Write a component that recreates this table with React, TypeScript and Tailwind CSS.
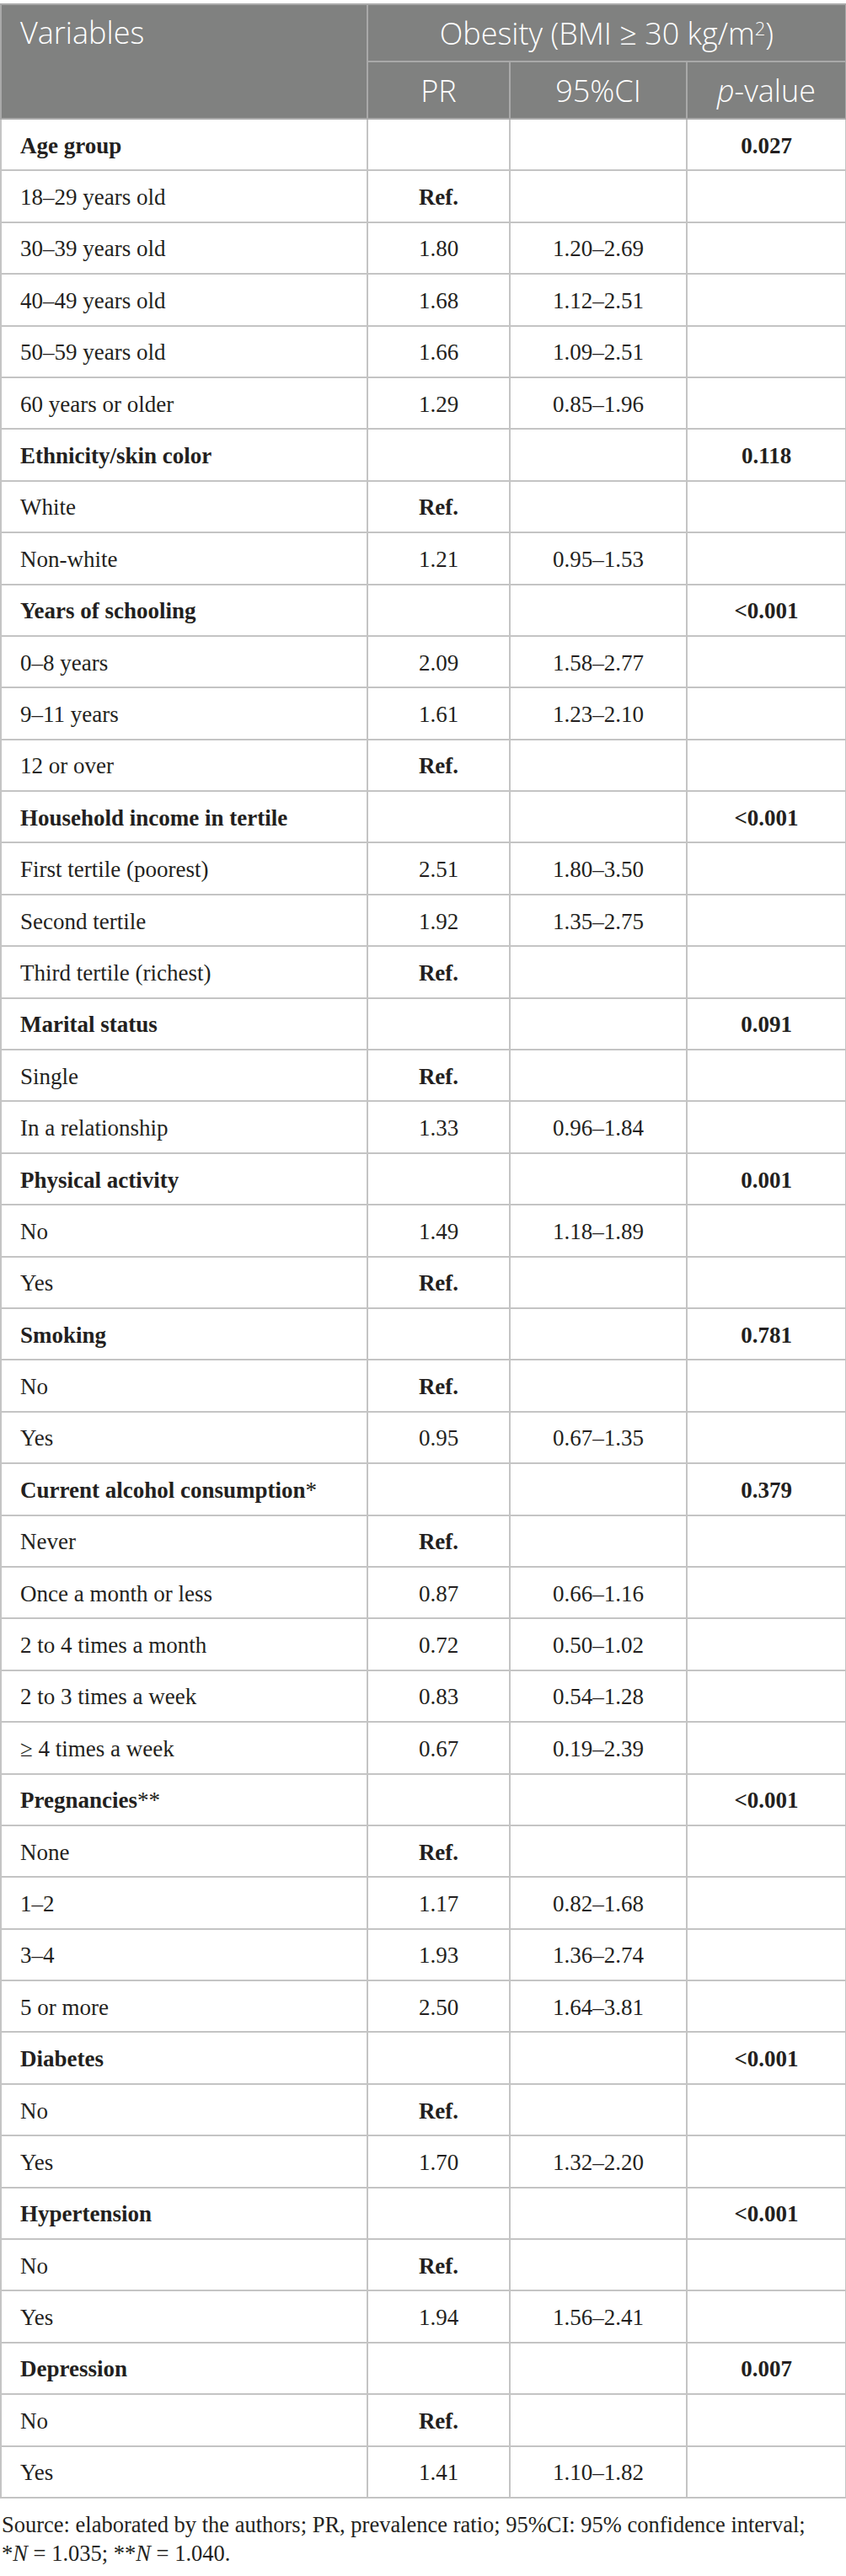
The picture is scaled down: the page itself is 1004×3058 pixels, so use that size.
type Row = [string, string, string];

interface Group {
  title: string;
  mark?: string;
  p: string;
  rows: Row[];
}

const GROUPS: Group[] = [
  {
    title: 'Age group',
    p: '0.027',
    rows: [
      ['18–29 years old', 'Ref.', ''],
      ['30–39 years old', '1.80', '1.20–2.69'],
      ['40–49 years old', '1.68', '1.12–2.51'],
      ['50–59 years old', '1.66', '1.09–2.51'],
      ['60 years or older', '1.29', '0.85–1.96'],
    ],
  },
  {
    title: 'Ethnicity/skin color',
    p: '0.118',
    rows: [
      ['White', 'Ref.', ''],
      ['Non-white', '1.21', '0.95–1.53'],
    ],
  },
  {
    title: 'Years of schooling',
    p: '<0.001',
    rows: [
      ['0–8 years', '2.09', '1.58–2.77'],
      ['9–11 years', '1.61', '1.23–2.10'],
      ['12 or over', 'Ref.', ''],
    ],
  },
  {
    title: 'Household income in tertile',
    p: '<0.001',
    rows: [
      ['First tertile (poorest)', '2.51', '1.80–3.50'],
      ['Second tertile', '1.92', '1.35–2.75'],
      ['Third tertile (richest)', 'Ref.', ''],
    ],
  },
  {
    title: 'Marital status',
    p: '0.091',
    rows: [
      ['Single', 'Ref.', ''],
      ['In a relationship', '1.33', '0.96–1.84'],
    ],
  },
  {
    title: 'Physical activity',
    p: '0.001',
    rows: [
      ['No', '1.49', '1.18–1.89'],
      ['Yes', 'Ref.', ''],
    ],
  },
  {
    title: 'Smoking',
    p: '0.781',
    rows: [
      ['No', 'Ref.', ''],
      ['Yes', '0.95', '0.67–1.35'],
    ],
  },
  {
    title: 'Current alcohol consumption',
    mark: '*',
    p: '0.379',
    rows: [
      ['Never', 'Ref.', ''],
      ['Once a month or less', '0.87', '0.66–1.16'],
      ['2 to 4 times a month', '0.72', '0.50–1.02'],
      ['2 to 3 times a week', '0.83', '0.54–1.28'],
      ['≥ 4 times a week', '0.67', '0.19–2.39'],
    ],
  },
  {
    title: 'Pregnancies',
    mark: '**',
    p: '<0.001',
    rows: [
      ['None', 'Ref.', ''],
      ['1–2', '1.17', '0.82–1.68'],
      ['3–4', '1.93', '1.36–2.74'],
      ['5 or more', '2.50', '1.64–3.81'],
    ],
  },
  {
    title: 'Diabetes',
    p: '<0.001',
    rows: [
      ['No', 'Ref.', ''],
      ['Yes', '1.70', '1.32–2.20'],
    ],
  },
  {
    title: 'Hypertension',
    p: '<0.001',
    rows: [
      ['No', 'Ref.', ''],
      ['Yes', '1.94', '1.56–2.41'],
    ],
  },
  {
    title: 'Depression',
    p: '0.007',
    rows: [
      ['No', 'Ref.', ''],
      ['Yes', '1.41', '1.10–1.82'],
    ],
  },
];

const cell = 'border-2 border-[#c4c4c4] p-0 pt-[3px] leading-[31px]';
const head = 'border-2 border-[#a9a9a9] p-0 font-light text-white';

export default function App() {
  return (
    <div className="w-[1004px] bg-white font-['Liberation_Serif','Times_New_Roman',serif] text-[27px] text-[#231f20]">
      <table className="mt-[4px] w-[1003px] table-fixed border-collapse">
        <colgroup>
          <col className="w-[435px]" />
          <col className="w-[169px]" />
          <col className="w-[210px]" />
          <col className="w-[189px]" />
        </colgroup>
        <thead className="bg-[#808180] font-['Open_Sans','Liberation_Sans',sans-serif] text-[36px] leading-[49px]">
          <tr className="h-[68px]">
            <th rowSpan={2} className={`${head} pl-[22px] pt-[8px] text-left align-top`}>
              Variables
            </th>
            <th colSpan={3} className={`${head} text-center`}>
              Obesity (BMI ≥ 30 kg/m<sup className="text-[22px]">2</sup>)
            </th>
          </tr>
          <tr className="h-[68px]">
            <th className={`${head} text-center`}>PR</th>
            <th className={`${head} text-center`}>95%CI</th>
            <th className={`${head} text-center`}>
              <i>p</i>-value
            </th>
          </tr>
        </thead>
        <tbody>
          {GROUPS.map((g) => (
            <>
              <tr key={g.title} className="h-[61.4px]">
                <td className={`${cell} pl-[22px] font-bold`}>
                  {g.title}
                  {g.mark && <span className="font-normal">{g.mark}</span>}
                </td>
                <td className={cell} />
                <td className={cell} />
                <td className={`${cell} text-center font-bold`}>{g.p}</td>
              </tr>
              {g.rows.map((r) => (
                <tr key={g.title + r[0]} className="h-[61.4px]">
                  <td className={`${cell} pl-[22px]`}>{r[0]}</td>
                  <td className={`${cell} text-center ${r[1] === 'Ref.' ? 'font-bold' : ''}`}>{r[1]}</td>
                  <td className={`${cell} text-center`}>{r[2]}</td>
                  <td className={cell} />
                </tr>
              ))}
            </>
          ))}
        </tbody>
      </table>
      <p className="mt-[14px] pl-[2px] text-[26.5px] leading-[34px]">
        Source: elaborated by the authors; PR, prevalence ratio; 95%CI: 95% confidence interval;
        <br />*<i>N</i> = 1.035; **<i>N</i> = 1.040.
      </p>
    </div>
  );
}
